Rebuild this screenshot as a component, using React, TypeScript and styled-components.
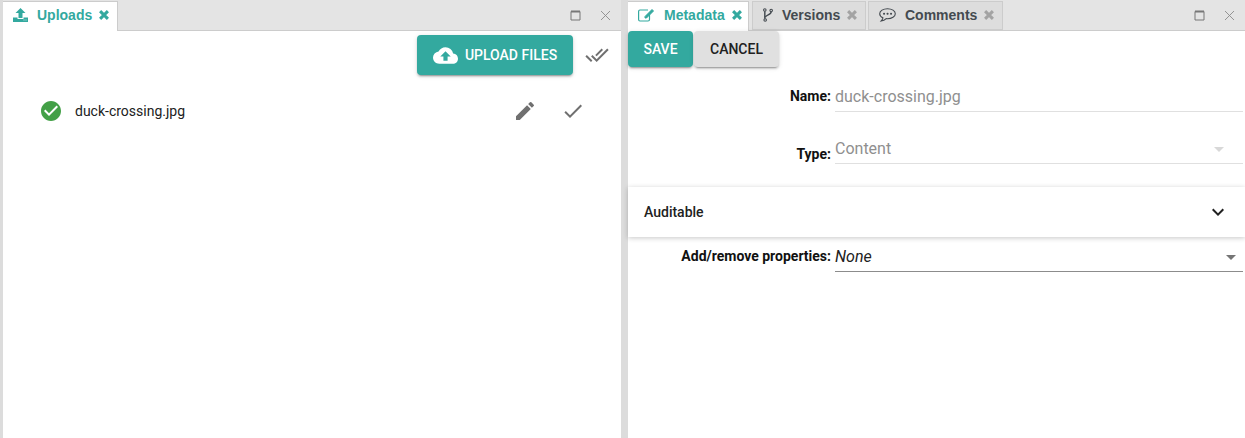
import React from 'react'
import styled, { createGlobalStyle } from 'styled-components'
import {
  MdArrowDropDown,
  MdCheck,
  MdCheckCircle,
  MdCloudUpload,
  MdDoneAll,
  MdEdit,
  MdKeyboardArrowDown,
} from 'react-icons/md'

const teal = '#33a99f'

const GlobalStyle = createGlobalStyle`
  html, body {
    margin: 0;
    padding: 0;
    height: 100%;
    overflow: hidden;
    background: #dcdcdc;
  }
  #root {
    height: 438px;
  }
  * {
    box-sizing: border-box;
  }
`

const Workspace = styled.div`
  display: flex;
  height: 438px;
  width: 1245px;
  padding-left: 3px;
  gap: 7px;
  font-family: Roboto, sans-serif;
  background: #dcdcdc;
`

const Pane = styled.section<{ $width: number }>`
  display: flex;
  flex-direction: column;
  width: ${p => p.$width}px;
  height: 100%;
  background: #fff;
`

const TabBar = styled.header`
  display: flex;
  align-items: flex-end;
  flex: none;
  height: 31px;
  gap: 2px;
  background: #e4e4e4;
  border-bottom: 1px solid #cccccc;
`

const Tab = styled.div<{ $active?: boolean; $width: number; $pad: number }>`
  display: flex;
  align-items: center;
  width: ${p => p.$width}px;
  height: ${p => (p.$active ? 30 : 29)}px;
  margin-bottom: ${p => (p.$active ? -1 : 0)}px;
  margin-right: ${p => (p.$active ? 1 : 0)}px;
  padding-left: ${p => p.$pad}px;
  padding-bottom: ${p => (p.$active ? 4 : 2)}px;
  font: bold 14px 'Liberation Sans', Arial, sans-serif;
  color: ${p => (p.$active ? teal : '#444a50')};
  background: ${p => (p.$active ? '#fff' : '#dddddd')};
  border: 1px solid #cccccc;
  border-bottom: ${p => (p.$active ? 'none' : '1px solid #cccccc')};
  border-left: ${p => (p.$active ? 'none' : '1px solid #cccccc')};
`

const TabIcon = styled.span<{ $width: number }>`
  display: flex;
  align-items: center;
  justify-content: center;
  width: ${p => p.$width}px;
  margin-right: 9px;
`

const TabCloseIcon = styled.svg<{ $active?: boolean }>`
  display: block;
  flex: none;
  width: 10px;
  height: 10px;
  margin-left: 7px;
  color: ${p => (p.$active ? teal : '#a3a3a3')};
`

const PaneControls = styled.div`
  display: flex;
  align-items: center;
  gap: 19px;
  height: 30px;
  margin-left: auto;
  padding-right: 10px;
`

const ControlIcon = styled.svg`
  display: block;
  width: 11px;
  height: 11px;
`

const Toolbar = styled.div`
  display: flex;
  justify-content: flex-end;
  align-items: center;
  gap: 12px;
  padding: 4px 12px 0 0;
`

const RaisedButton = styled.button<{ $primary?: boolean }>`
  display: inline-flex;
  align-items: center;
  justify-content: center;
  border: none;
  border-radius: 4px;
  font: 500 14px Roboto, sans-serif;
  text-transform: uppercase;
  color: ${p => (p.$primary ? '#fff' : '#212121')};
  background: ${p => (p.$primary ? teal : '#e0e0e0')};
  box-shadow: 0 3px 1px -2px rgba(0, 0, 0, 0.2), 0 2px 2px 0 rgba(0, 0, 0, 0.14),
    0 1px 5px 0 rgba(0, 0, 0, 0.12);
`

const UploadButton = styled(RaisedButton)`
  gap: 7px;
  width: 156px;
  height: 40px;
  font-size: 14px;
  svg {
    font-size: 25px;
  }
`

const ActionButton = styled(RaisedButton)<{ $width: number }>`
  width: ${p => p.$width}px;
  height: 36px;
`

const IconButton = styled.span<{ $size: number }>`
  display: flex;
  font-size: ${p => p.$size}px;
  color: #707070;
`

const UploadRow = styled.div`
  display: flex;
  align-items: center;
  height: 24px;
  margin-top: 24px;
  padding: 0 36px 0 36px;
  font-size: 14px;
  color: #212121;
`

const StatusIcon = styled.span`
  display: flex;
  margin-right: 12px;
  font-size: 24px;
  color: #43a047;
`

const FileName = styled.span`
  flex: 1;
`

const RowActions = styled.div`
  display: flex;
  align-items: center;
  gap: 13px;
`

const EditAction = styled(IconButton)`
  margin-right: 11px;
`

const ActionBar = styled.div`
  display: flex;
  gap: 1px;
  flex: none;
`

const FormRow = styled.div<{ $top: number }>`
  display: grid;
  grid-template-columns: 203px 408px;
  column-gap: 4px;
  align-items: start;
  height: 31px;
  margin-top: ${p => p.$top}px;
`

const FieldLabel = styled.label<{ $drop?: number }>`
  padding-top: ${p => p.$drop ?? 0}px;
  font-size: 14px;
  font-weight: 700;
  line-height: 30px;
  text-align: right;
  color: #111;
`

const Field = styled.div<{ $disabled?: boolean; $italic?: boolean }>`
  display: flex;
  align-items: center;
  justify-content: space-between;
  height: 31px;
  padding-top: 1px;
  font-size: 16px;
  line-height: 29px;
  font-style: ${p => (p.$italic ? 'italic' : 'normal')};
  color: ${p => (p.$disabled ? '#8f8f8f' : '#212121')};
  border-bottom: 1px solid ${p => (p.$disabled ? '#e0e0e0' : '#8c8c8c')};
`

const Caret = styled.span<{ $disabled?: boolean }>`
  display: flex;
  margin-right: ${p => (p.$disabled ? 12 : 0)}px;
  font-size: 24px;
  color: ${p => (p.$disabled ? '#d8d8d8' : '#757575')};
`

const Accordion = styled.div`
  display: flex;
  align-items: center;
  justify-content: space-between;
  height: 50px;
  margin-top: 23px;
  padding: 0 15px 0 16px;
  font-size: 14px;
  font-weight: 500;
  color: #212121;
  background: #fff;
  box-shadow: 0 1px 5px rgba(0, 0, 0, 0.22);
  svg {
    font-size: 24px;
    color: #212121;
  }
`

const UploadTrayIcon = () => (
  <svg width="15" height="14" viewBox="0 0 15 14" fill={teal}>
    <path d="M7.5 0 12.5 5H9.5V10H5.5V5H2.5Z" />
    <path d="M0 9.5H4.5V11H10.5V9.5H15V14H0Z" />
    <path d="M10.5 11.5H11.5V12.5H10.5ZM12.5 11.5H13.5V12.5H12.5Z" fill="#cfeeea" />
  </svg>
)

const EditIcon = () => (
  <svg width="17" height="14" viewBox="0 0 17 14" fill="none" stroke={teal}>
    <path d="M11.5 6.5V11.5A1.5 1.5 0 0 1 10 13H2A1.5 1.5 0 0 1 .6 11.5V3.5A1.5 1.5 0 0 1 2 2H10" strokeWidth="1.2" />
    <path d="M7 8.5 14 1.5 15.5 3 8.5 10H7Z" fill={teal} strokeWidth="1" />
  </svg>
)

const ForkIcon = () => (
  <svg width="10" height="14" viewBox="0 0 11 15" fill="none" stroke="#444a50">
    <circle cx="2" cy="2" r="1.4" strokeWidth="1.2" />
    <circle cx="9" cy="2.5" r="1.4" strokeWidth="1.2" />
    <circle cx="2.4" cy="13" r="1.4" strokeWidth="1.2" />
    <path d="M2 3.4V11.6" strokeWidth="1.6" />
    <path d="M9 3.9C9 7.4 3.2 7 2.4 10" strokeWidth="1.6" />
  </svg>
)

const CommentIcon = () => (
  <svg width="17" height="14" viewBox="0 0 17 14" fill="none" stroke="#444a50">
    <path d="M8.5.7C4.2.7.7 2.9.7 5.7 .7 7.4 2 8.9 3.9 9.8 3.7 11 3 12.2 2.2 13 4 12.8 6 11.8 7.2 10.6L8.5 10.7C12.8 10.7 16.3 8.5 16.3 5.7S12.8.7 8.5.7Z" strokeWidth="1.1" />
    <path d="M5 5.7H5.1M8.5 5.7H8.6M12 5.7H12.1" strokeWidth="2" strokeLinecap="round" />
  </svg>
)

const CloseGlyph = ({ active }: { active?: boolean }) => (
  <TabCloseIcon $active={active} viewBox="0 0 10 10">
    <path d="M1.1 1.1 8.9 8.9M8.9 1.1 1.1 8.9" stroke="currentColor" strokeWidth="3" />
  </TabCloseIcon>
)

const PaneButtons = () => (
  <PaneControls>
    <ControlIcon viewBox="0 0 11 11">
      <path d="M1 1.5H10V10H1Z" fill="none" stroke="#777" strokeWidth="1" />
      <path d="M1 1.5H10" stroke="#777" strokeWidth="2" />
    </ControlIcon>
    <ControlIcon viewBox="0 0 11 11">
      <path d="M1 1 10 10M10 1 1 10" stroke="#8a8a8a" strokeWidth="0.9" />
    </ControlIcon>
  </PaneControls>
)

export default function App() {
  return (
    <Workspace>
      <GlobalStyle />
      <Pane $width={618}>
        <TabBar>
          <Tab $active $width={115} $pad={10}>
            <TabIcon $width={15}>
              <UploadTrayIcon />
            </TabIcon>
            Uploads
            <CloseGlyph active />
          </Tab>
          <PaneButtons />
        </TabBar>
        <Toolbar>
          <UploadButton $primary>
            <MdCloudUpload />
            Upload files
          </UploadButton>
          <IconButton $size={24}>
            <MdDoneAll />
          </IconButton>
        </Toolbar>
        <UploadRow>
          <StatusIcon>
            <MdCheckCircle />
          </StatusIcon>
          <FileName>duck-crossing.jpg</FileName>
          <RowActions>
            <EditAction $size={24}>
              <MdEdit />
            </EditAction>
            <IconButton $size={24}>
              <MdCheck />
            </IconButton>
          </RowActions>
        </UploadRow>
      </Pane>
      <Pane $width={617}>
        <TabBar>
          <Tab $active $width={121} $pad={10}>
            <TabIcon $width={17}>
              <EditIcon />
            </TabIcon>
            Metadata
            <CloseGlyph active />
          </Tab>
          <Tab $width={114} $pad={10}>
            <TabIcon $width={10}>
              <ForkIcon />
            </TabIcon>
            Versions
            <CloseGlyph />
          </Tab>
          <Tab $width={135} $pad={10}>
            <TabIcon $width={17}>
              <CommentIcon />
            </TabIcon>
            Comments
            <CloseGlyph />
          </Tab>
          <PaneButtons />
        </TabBar>
        <ActionBar>
          <ActionButton $primary $width={65}>
            Save
          </ActionButton>
          <ActionButton $width={85}>Cancel</ActionButton>
        </ActionBar>
        <FormRow $top={14}>
          <FieldLabel>Name:</FieldLabel>
          <Field $disabled>duck-crossing.jpg</Field>
        </FormRow>
        <FormRow $top={21}>
          <FieldLabel $drop={6}>Type:</FieldLabel>
          <Field $disabled>
            Content
            <Caret $disabled>
              <MdArrowDropDown />
            </Caret>
          </Field>
        </FormRow>
        <Accordion>
          Auditable
          <MdKeyboardArrowDown />
        </Accordion>
        <FormRow $top={4}>
          <FieldLabel>Add/remove properties:</FieldLabel>
          <Field $italic>
            None
            <Caret>
              <MdArrowDropDown />
            </Caret>
          </Field>
        </FormRow>
      </Pane>
    </Workspace>
  )
}
